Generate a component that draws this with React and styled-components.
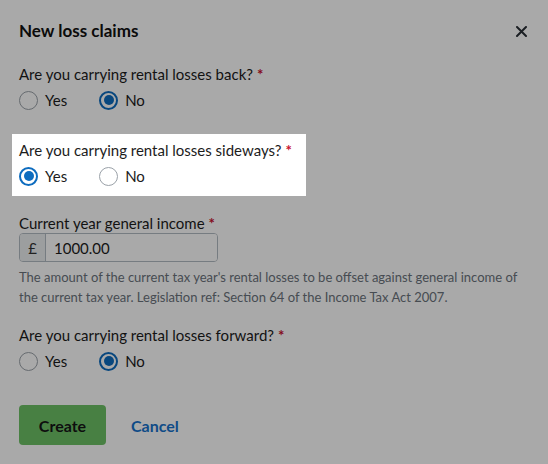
import React, { useState } from 'react';
import styled, { createGlobalStyle } from 'styled-components';

const GlobalStyle = createGlobalStyle`
    html, body {
        margin: 0;
        padding: 0;
    }
    body {
        font-family: Lato, "Liberation Sans", sans-serif;
        color: #1c1c1c;
        background: #ffffff;
    }
    * {
        box-sizing: border-box;
    }
`;

// Styled Components
const Page = styled.div`
    position: relative;
    width: 548px;
    height: 464px;
    overflow: hidden;
    padding: 19px 19px 0 19px;
    background: #ffffff;
`;

const Overlay = styled.div`
    position: absolute;
    inset: 0;
    background: rgba(0, 0, 0, 0.337);
    z-index: 1;
`;

const Header = styled.div`
    display: flex;
    justify-content: space-between;
    align-items: center;
    height: 24px;
    margin-bottom: 21px;
`;

const Title = styled.h4`
    margin: 0;
    font-size: 17px;
    font-weight: 700;
    line-height: 24px;
    color: #111;
`;

const CloseButton = styled.button`
    display: flex;
    align-items: center;
    justify-content: center;
    width: 20px;
    height: 20px;
    padding: 0;
    margin-right: -2px;
    border: none;
    background: transparent;
    color: #2a2f36;
    cursor: pointer;
`;

const Field = styled.div`
    display: flex;
    flex-direction: column;
    margin-bottom: ${props => (props.$gap ? props.$gap : 0)}px;
    ${props =>
        props.$highlight &&
        `
        position: relative;
        z-index: 2;
        background: #ffffff;
        margin-left: -7px;
        margin-right: 223px;
        padding: 6px 7px 8px 7px;
    `}
`;

const Label = styled.div`
    font-size: 15px;
    line-height: 20px;
    color: #1c1c1c;
`;

const Required = styled.span`
    color: #c8102e;
    margin-left: 4px;
    font-weight: 700;
`;

const RadioRow = styled.div`
    display: flex;
    align-items: center;
    gap: 32px;
    height: 24px;
    margin-top: 4px;
`;

const RadioOption = styled.label`
    display: flex;
    align-items: center;
    gap: 7px;
    font-size: 15px;
    cursor: pointer;
`;

const RadioCircle = styled.span`
    display: flex;
    align-items: center;
    justify-content: center;
    width: 19px;
    height: 19px;
    border-radius: 50%;
    border: ${props => (props.$checked ? '2px solid #0d6cbf' : '1px solid #9aa1a8')};
    background: #ffffff;

    &::after {
        content: '';
        display: ${props => (props.$checked ? 'block' : 'none')};
        width: 10px;
        height: 10px;
        border-radius: 50%;
        background: #0d6cbf;
    }
`;

const InputGroup = styled.div`
    display: flex;
    width: 199px;
    height: 29px;
    border: 1px solid #b3bbc3;
    border-radius: 4px;
    overflow: hidden;
`;

const Prefix = styled.span`
    display: flex;
    align-items: center;
    justify-content: center;
    width: 26px;
    background: #eceef0;
    border-right: 1px solid #b3bbc3;
    font-size: 15px;
    color: #333;
`;

const Input = styled.input`
    flex: 1;
    min-width: 0;
    border: none;
    outline: none;
    padding: 0 0 0 8px;
    font-family: inherit;
    font-size: 15px;
    color: #1c1c1c;
    background: #ffffff;
`;

const HelpText = styled.p`
    margin: 5px 0 0 0;
    font-size: 13px;
    line-height: 20px;
    color: #6b737c;
`;

const ButtonContainer = styled.div`
    display: flex;
    align-items: center;
    gap: 25px;
    margin-top: 32px;
`;

const CreateButton = styled.button`
    width: 87px;
    height: 40px;
    border: none;
    border-radius: 4px;
    background: #6dc266;
    color: #161616;
    font-family: inherit;
    font-size: 16px;
    font-weight: 700;
    cursor: pointer;
`;

const CancelButton = styled.button`
    border: none;
    background: transparent;
    padding: 0;
    color: #1772cc;
    font-family: inherit;
    font-size: 16px;
    font-weight: 700;
    cursor: pointer;
`;

const RadioField = ({ label, value, onChange, highlight, gap }) => (
    <Field $highlight={highlight} $gap={gap}>
        <Label>
            {label}
            <Required>*</Required>
        </Label>
        <RadioRow>
            <RadioOption onClick={() => onChange('yes')}>
                <RadioCircle $checked={value === 'yes'} />
                Yes
            </RadioOption>
            <RadioOption onClick={() => onChange('no')}>
                <RadioCircle $checked={value === 'no'} />
                No
            </RadioOption>
        </RadioRow>
    </Field>
);

const App = () => {
    const [Back, setBack] = useState('no');
    const [Sideways, setSideways] = useState('yes');
    const [Forward, setForward] = useState('no');
    const [Income, setIncome] = useState('1000.00');

    return (
        <>
            <GlobalStyle />
            <Page>
                <Header>
                    <Title>New loss claims</Title>
                    <CloseButton aria-label="Close">
                        <svg width="11" height="11" viewBox="0 0 11 11">
                            <path d="M1 1 L10 10 M10 1 L1 10" stroke="currentColor" strokeWidth="2" strokeLinecap="round" />
                        </svg>
                    </CloseButton>
                </Header>

                <RadioField label="Are you carrying rental losses back?" value={Back} onChange={setBack} gap={22} />
                <RadioField
                    label="Are you carrying rental losses sideways?"
                    value={Sideways}
                    onChange={setSideways}
                    highlight
                    gap={17}
                />

                <Field $gap={18}>
                    <Label>
                        Current year general income
                        <Required>*</Required>
                    </Label>
                    <InputGroup>
                        <Prefix>£</Prefix>
                        <Input value={Income} onChange={e => setIncome(e.target.value)} />
                    </InputGroup>
                    <HelpText>
                        The amount of the current tax year's rental losses to be offset against general income of the
                        current tax year. Legislation ref: Section 64 of the Income Tax Act 2007.
                    </HelpText>
                </Field>

                <RadioField label="Are you carrying rental losses forward?" value={Forward} onChange={setForward} />

                <ButtonContainer>
                    <CreateButton>Create</CreateButton>
                    <CancelButton>Cancel</CancelButton>
                </ButtonContainer>

                <Overlay />
            </Page>
        </>
    );
};

export default App;
